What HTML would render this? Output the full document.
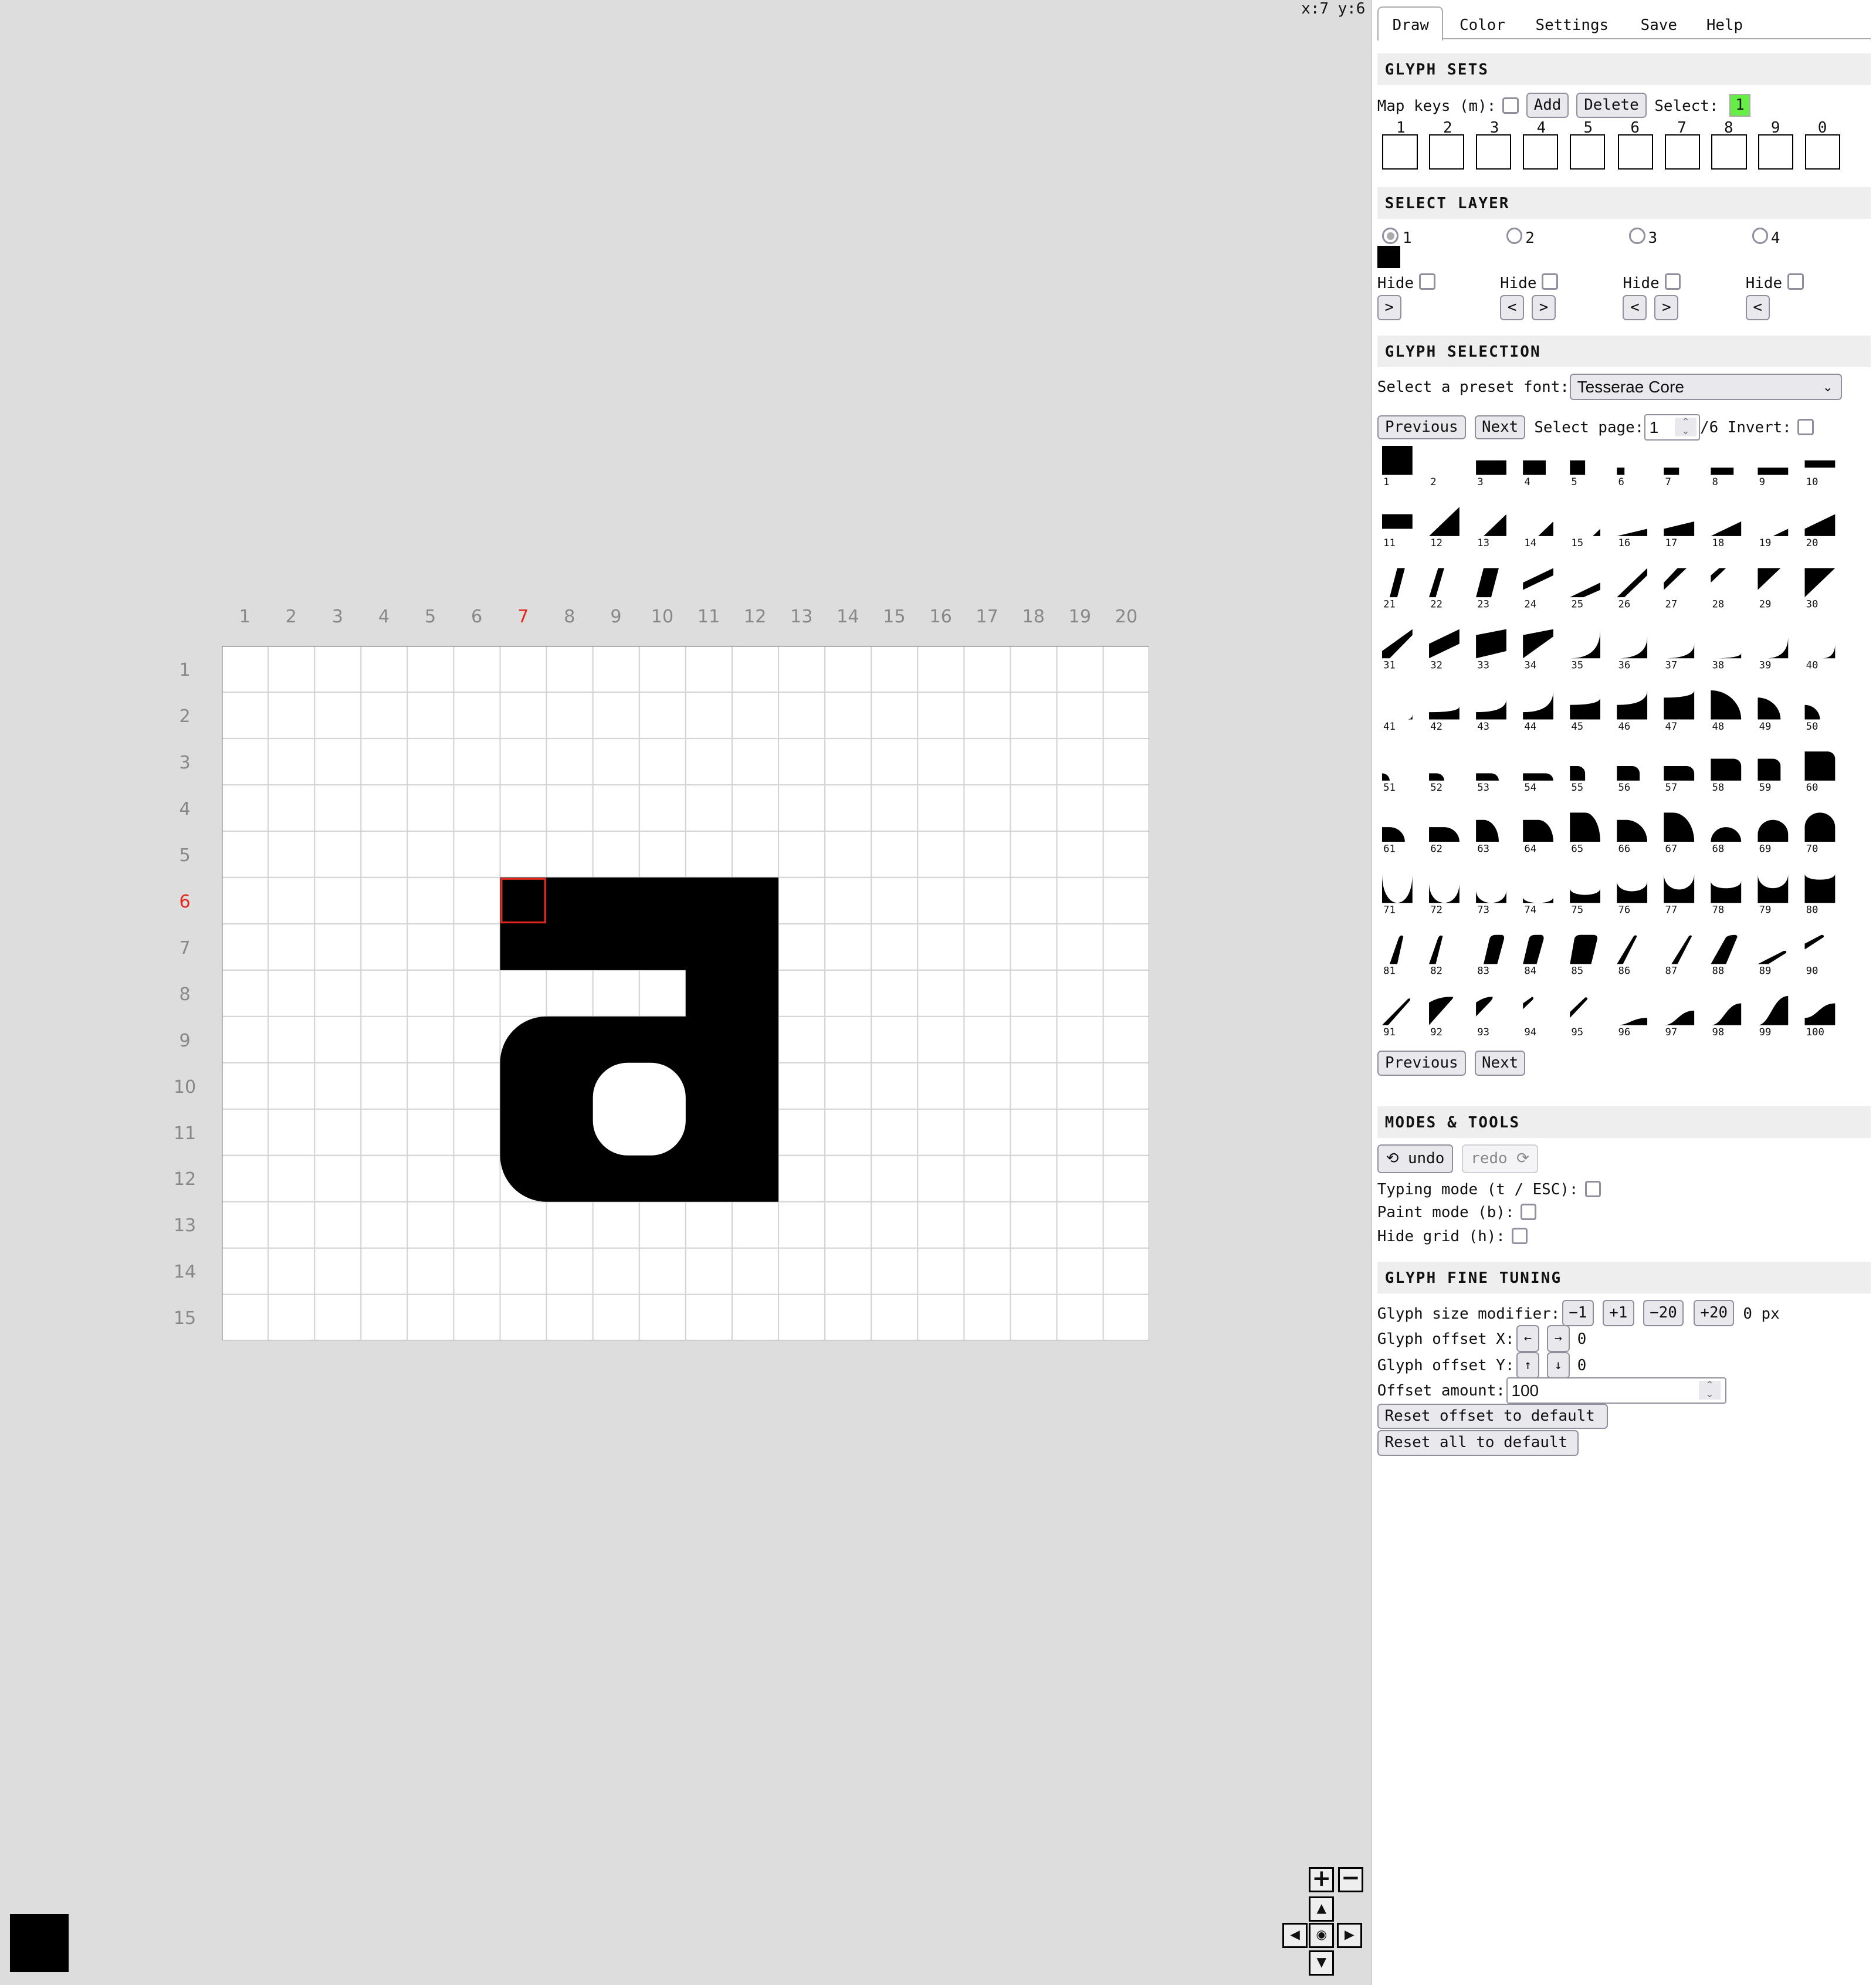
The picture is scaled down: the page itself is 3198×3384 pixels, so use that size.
<!DOCTYPE html>
<html><head><meta charset="utf-8">
<style>
html,body{margin:0;padding:0;width:3198px;height:3384px;overflow:hidden;background:#dddddd;}
#w{zoom:2.15789;width:1482px;height:1568px;position:relative;font-family:"DejaVu Sans Mono","Liberation Mono",monospace;font-size:12px;color:#111;}
.a{position:absolute;white-space:nowrap;}
.t{position:absolute;white-space:nowrap;line-height:14px;transform:translateY(-6px);}
#panel{position:absolute;left:1083px;top:0;width:399px;height:1568px;background:#fff;border-left:1px solid #cfcfcf;}
.hd{position:absolute;left:1088px;width:390px;height:25px;background:#eeeeee;}
.hd span{position:absolute;left:6px;top:6px;font-weight:bold;letter-spacing:1px;font-size:12px;}
.cb{position:absolute;width:10px;height:10px;border:1.5px solid #8f8f9d;border-radius:2px;background:#fff;}
.btn{position:absolute;box-sizing:border-box;background:#e9e9ed;border:1px solid #8f8f9d;border-radius:3px;text-align:center;font-size:12px;}
.gb{position:absolute;width:26px;height:26px;border:1px solid #000;top:106px;background:#fff;}
.rd{position:absolute;width:10px;height:10px;border:1.5px solid #8f8f9d;border-radius:50%;top:180px;}
.nv{position:absolute;box-sizing:border-box;width:20px;height:20px;border:1.5px solid #000;background:#eee;text-align:center;font-family:"DejaVu Sans",sans-serif;font-size:10px;line-height:17px;}
</style></head><body><div id="w">
<div class="a" style="left:1028px;top:0px;font-size:12px;">x:7 y:6</div>

<div style="position:absolute;left:175px;top:479px;width:733px;height:20px;font-family:'DejaVu Sans',sans-serif;font-size:14px;color:#888;display:flex;">
<span style="flex:1;text-align:center">1</span><span style="flex:1;text-align:center">2</span><span style="flex:1;text-align:center">3</span><span style="flex:1;text-align:center">4</span><span style="flex:1;text-align:center">5</span><span style="flex:1;text-align:center">6</span><span style="flex:1;text-align:center;color:#e0281e">7</span><span style="flex:1;text-align:center">8</span><span style="flex:1;text-align:center">9</span><span style="flex:1;text-align:center">10</span><span style="flex:1;text-align:center">11</span><span style="flex:1;text-align:center">12</span><span style="flex:1;text-align:center">13</span><span style="flex:1;text-align:center">14</span><span style="flex:1;text-align:center">15</span><span style="flex:1;text-align:center">16</span><span style="flex:1;text-align:center">17</span><span style="flex:1;text-align:center">18</span><span style="flex:1;text-align:center">19</span><span style="flex:1;text-align:center">20</span>
</div>
<div style="position:absolute;left:126px;top:511px;width:40px;height:549px;font-family:'DejaVu Sans',sans-serif;font-size:14px;color:#888;display:flex;flex-direction:column;">
<span style="flex:1;display:flex;align-items:center;justify-content:center">1</span><span style="flex:1;display:flex;align-items:center;justify-content:center">2</span><span style="flex:1;display:flex;align-items:center;justify-content:center">3</span><span style="flex:1;display:flex;align-items:center;justify-content:center">4</span><span style="flex:1;display:flex;align-items:center;justify-content:center">5</span><span style="flex:1;display:flex;align-items:center;justify-content:center;color:#e0281e">6</span><span style="flex:1;display:flex;align-items:center;justify-content:center">7</span><span style="flex:1;display:flex;align-items:center;justify-content:center">8</span><span style="flex:1;display:flex;align-items:center;justify-content:center">9</span><span style="flex:1;display:flex;align-items:center;justify-content:center">10</span><span style="flex:1;display:flex;align-items:center;justify-content:center">11</span><span style="flex:1;display:flex;align-items:center;justify-content:center">12</span><span style="flex:1;display:flex;align-items:center;justify-content:center">13</span><span style="flex:1;display:flex;align-items:center;justify-content:center">14</span><span style="flex:1;display:flex;align-items:center;justify-content:center">15</span>
</div>

<svg style="position:absolute;left:175px;top:510px" width="733" height="549" viewBox="0 0 20 15" preserveAspectRatio="none">
<rect x="0" y="0" width="20" height="15" fill="#fff"/>
<path stroke="#d4d4d4" stroke-width="1" vector-effect="non-scaling-stroke" d="M1 0V15M2 0V15M3 0V15M4 0V15M5 0V15M6 0V15M7 0V15M8 0V15M9 0V15M10 0V15M11 0V15M12 0V15M13 0V15M14 0V15M15 0V15M16 0V15M17 0V15M18 0V15M19 0V15M0 1H20M0 2H20M0 3H20M0 4H20M0 5H20M0 6H20M0 7H20M0 8H20M0 9H20M0 10H20M0 11H20M0 12H20M0 13H20M0 14H20"/>
<path d="M6 5H12V12H7A1 1 0 0 1 6 11V9A1 1 0 0 1 7 8H10V7H6Z" fill="#000"/>
<rect x="8" y="9" width="2" height="2" rx="0.75" ry="0.75" fill="#fff"/>
<rect x="6.03" y="5.03" width="0.94" height="0.94" fill="none" stroke="#e0281e" stroke-width="1.5" vector-effect="non-scaling-stroke"/>
<rect x="0" y="0" width="20" height="15" fill="none" stroke="#999" stroke-width="1.5" vector-effect="non-scaling-stroke"/>
</svg>

<div class="a" style="left:8px;top:1512px;width:46px;height:46px;background:#000"></div>

<div class="nv" style="left:1034px;top:1475px;font-size:18px;line-height:16px;font-weight:bold">+</div>
<div class="nv" style="left:1057px;top:1475px;font-size:18px;line-height:15px;font-weight:bold">−</div>
<div class="nv" style="left:1034px;top:1498px">▲</div>
<div class="nv" style="left:1013px;top:1519px">◀</div>
<div class="nv" style="left:1034px;top:1519px">◉</div>
<div class="nv" style="left:1056px;top:1519px">▶</div>
<div class="nv" style="left:1034px;top:1541px">▼</div>

<div id="panel"></div>

<div class="a" style="left:1088px;top:30px;width:390px;height:1px;background:#aaa"></div>
<div class="a" style="left:1088px;top:5px;width:52px;border:1px solid #aaa;border-bottom:none;border-radius:4px 4px 0 0;background:#fff;box-sizing:border-box;height:27px"></div>
<div class="t" style="left:1100px;top:19px">Draw</div>
<div class="t" style="left:1153px;top:19px">Color</div>
<div class="t" style="left:1213px;top:19px">Settings</div>
<div class="t" style="left:1296px;top:19px">Save</div>
<div class="t" style="left:1348px;top:19px">Help</div>

<div class="hd" style="top:42px"><span>GLYPH SETS</span></div>
<div class="t" style="left:1088px;top:83px">Map keys (m):</div>
<div class="cb" style="left:1187px;top:77px"></div>
<div class="btn" style="left:1206px;top:73px;width:33px;height:20px;line-height:18px">Add</div>
<div class="btn" style="left:1245px;top:73px;width:56px;height:20px;line-height:18px">Delete</div>
<div class="t" style="left:1307px;top:83px">Select:</div>
<div class="a" style="left:1366px;top:74px;width:17px;height:18px;background:#66ee44;border:1px solid #aaa;box-sizing:border-box;text-align:center;line-height:16px">1</div>
<div class="t" style="left:1103px;top:100px">1</div><div class="t" style="left:1140px;top:100px">2</div><div class="t" style="left:1177px;top:100px">3</div><div class="t" style="left:1214px;top:100px">4</div><div class="t" style="left:1251px;top:100px">5</div><div class="t" style="left:1288px;top:100px">6</div><div class="t" style="left:1325px;top:100px">7</div><div class="t" style="left:1362px;top:100px">8</div><div class="t" style="left:1399px;top:100px">9</div><div class="t" style="left:1436px;top:100px">0</div>
<div class="gb" style="left:1092px"></div><div class="gb" style="left:1129px"></div><div class="gb" style="left:1166px"></div><div class="gb" style="left:1203px"></div><div class="gb" style="left:1240px"></div><div class="gb" style="left:1278px"></div><div class="gb" style="left:1315px"></div><div class="gb" style="left:1352px"></div><div class="gb" style="left:1389px"></div><div class="gb" style="left:1426px"></div>

<div class="hd" style="top:148px"><span>SELECT LAYER</span></div>
<div class="rd" style="left:1092px;"><div style="position:absolute;left:2px;top:2px;width:6px;height:6px;border-radius:50%;background:#aaa"></div></div>
<div class="t" style="left:1108px;top:187px">1</div>
<div class="rd" style="left:1190px"></div><div class="t" style="left:1205px;top:187px">2</div>
<div class="rd" style="left:1287px"></div><div class="t" style="left:1302px;top:187px">3</div>
<div class="rd" style="left:1384px"></div><div class="t" style="left:1399px;top:187px">4</div>
<div class="a" style="left:1088px;top:194px;width:18px;height:18px;background:#000"></div>
<div class="t" style="left:1088px;top:223px">Hide</div><div class="cb" style="left:1121px;top:216px"></div>
<div class="t" style="left:1185px;top:223px">Hide</div><div class="cb" style="left:1218px;top:216px"></div>
<div class="t" style="left:1282px;top:223px">Hide</div><div class="cb" style="left:1315px;top:216px"></div>
<div class="t" style="left:1379px;top:223px">Hide</div><div class="cb" style="left:1412px;top:216px"></div>
<div class="btn" style="left:1088px;top:233px;width:19px;height:20px;line-height:18px">&gt;</div>
<div class="btn" style="left:1185px;top:233px;width:19px;height:20px;line-height:18px">&lt;</div>
<div class="btn" style="left:1210px;top:233px;width:19px;height:20px;line-height:18px">&gt;</div>
<div class="btn" style="left:1282px;top:233px;width:19px;height:20px;line-height:18px">&lt;</div>
<div class="btn" style="left:1307px;top:233px;width:19px;height:20px;line-height:18px">&gt;</div>
<div class="btn" style="left:1379px;top:233px;width:19px;height:20px;line-height:18px">&lt;</div>

<div class="hd" style="top:265px"><span>GLYPH SELECTION</span></div>
<div class="t" style="left:1088px;top:305px">Select a preset font:</div>
<div class="a" style="left:1240px;top:295px;width:215px;height:21px;box-sizing:border-box;background:#e9e9ed;border:1px solid #8f8f9d;border-radius:3px;font-family:'Liberation Sans',sans-serif;font-size:13px;line-height:19px;padding-left:5px">Tesserae Core<span style="position:absolute;right:6px;top:0;font-size:10px">&#8964;</span></div>

<div class="btn" style="left:1088px;top:328px;width:70px;height:19px;line-height:17px">Previous</div>
<div class="btn" style="left:1165px;top:328px;width:40px;height:19px;line-height:17px">Next</div>
<div class="t" style="left:1212px;top:337px">Select page:</div>
<div class="a" style="left:1299px;top:327px;width:44px;height:21px;box-sizing:border-box;border:1px solid #8f8f9d;border-radius:2px;background:#fff;font-family:'Liberation Sans',sans-serif;font-size:13px;line-height:19px;padding-left:3px">1<span style="position:absolute;right:2px;top:2px;width:17px;height:15px;background:#e9e9ed;font-size:8px;line-height:7px;text-align:center;color:#777">⌃<br>⌄</span></div>
<div class="t" style="left:1343px;top:337px">/6 Invert:</div>
<div class="cb" style="left:1420px;top:331px"></div>

<svg class="a" style="left:1092px;top:352px" width="380" height="470" font-family="DejaVu Sans Mono, monospace" font-size="8">
<g fill="#000">
<g transform="translate(0,0) scale(.24 .23)"><path d="M0 0H100V100H0Z"/></g>
<g transform="translate(74.2,0) scale(.24 .23)"><path d="M0 50H100V100H0Z"/></g>
<g transform="translate(111.3,0) scale(.24 .23)"><path d="M0 50H75V100H0Z"/></g>
<g transform="translate(148.4,0) scale(.24 .23)"><path d="M0 50H50V100H0Z"/></g>
<g transform="translate(185.5,0) scale(.24 .23)"><path d="M0 75H25V100H0Z"/></g>
<g transform="translate(222.6,0) scale(.24 .23)"><path d="M0 75H50V100H0Z"/></g>
<g transform="translate(259.7,0) scale(.24 .23)"><path d="M0 75H75V100H0Z"/></g>
<g transform="translate(296.8,0) scale(.24 .23)"><path d="M0 75H100V100H0Z"/></g>
<g transform="translate(333.9,0) scale(.24 .23)"><path d="M0 50H100V75H0Z"/></g>
<g transform="translate(0,48.3) scale(.24 .23)"><path d="M0 25H100V75H0Z"/></g>
<g transform="translate(37.1,48.3) scale(.24 .23)"><path d="M0 100H100V0Z"/></g>
<g transform="translate(74.2,48.3) scale(.24 .23)"><path d="M25 100H100V25Z"/></g>
<g transform="translate(111.3,48.3) scale(.24 .23)"><path d="M50 100H100V50Z"/></g>
<g transform="translate(148.4,48.3) scale(.24 .23)"><path d="M75 100H100V75Z"/></g>
<g transform="translate(185.5,48.3) scale(.24 .23)"><path d="M0 100H100V75Z"/></g>
<g transform="translate(222.6,48.3) scale(.24 .23)"><path d="M0 75L100 50V100H0Z"/></g>
<g transform="translate(259.7,48.3) scale(.24 .23)"><path d="M0 100L100 50V100Z"/></g>
<g transform="translate(296.8,48.3) scale(.24 .23)"><path d="M50 100L100 75V100Z"/></g>
<g transform="translate(333.9,48.3) scale(.24 .23)"><path d="M0 75L100 25V100H0Z"/></g>
<g transform="translate(0,96.6) scale(.24 .23)"><path d="M50 0H75L50 100H25Z"/></g>
<g transform="translate(37.1,96.6) scale(.24 .23)"><path d="M30 0H50L22 100H0Z"/></g>
<g transform="translate(74.2,96.6) scale(.24 .23)"><path d="M25 0H75L50 100H0Z"/></g>
<g transform="translate(111.3,96.6) scale(.24 .23)"><path d="M0 50L100 0V25L0 75Z"/></g>
<g transform="translate(148.4,96.6) scale(.24 .23)"><path d="M0 100L100 50V75L45 100Z"/></g>
<g transform="translate(185.5,96.6) scale(.24 .23)"><path d="M0 100L100 0V25L25 100Z"/></g>
<g transform="translate(222.6,96.6) scale(.24 .23)"><path d="M0 50L45 0H75L0 75Z"/></g>
<g transform="translate(259.7,96.6) scale(.24 .23)"><path d="M0 25L28 0H50L0 50Z"/></g>
<g transform="translate(296.8,96.6) scale(.24 .23)"><path d="M0 0H75L0 75Z"/></g>
<g transform="translate(333.9,96.6) scale(.24 .23)"><path d="M0 0H100L0 100Z"/></g>
<g transform="translate(0,144.9) scale(.24 .23)"><path d="M0 75L100 0V20L25 100H0Z"/></g>
<g transform="translate(37.1,144.9) scale(.24 .23)"><path d="M0 50L100 0V50L0 100Z"/></g>
<g transform="translate(74.2,144.9) scale(.24 .23)"><path d="M0 20L100 0V75L0 100Z"/></g>
<g transform="translate(111.3,144.9) scale(.24 .23)"><path d="M0 20L100 0V25L0 100Z"/></g>
<g transform="translate(148.4,144.9) scale(.24 .23)"><path d="M0 100Q100 100 100 0V100Z"/></g>
<g transform="translate(185.5,144.9) scale(.24 .23)"><path d="M0 100Q100 100 100 25V100Z"/></g>
<g transform="translate(222.6,144.9) scale(.24 .23)"><path d="M0 100Q100 100 100 50V100Z"/></g>
<g transform="translate(259.7,144.9) scale(.24 .23)"><path d="M0 100Q100 100 100 82V100Z"/></g>
<g transform="translate(296.8,144.9) scale(.24 .23)"><path d="M25 100Q100 100 100 25V100Z"/></g>
<g transform="translate(333.9,144.9) scale(.24 .23)"><path d="M55 100Q100 100 100 50V100Z"/></g>
<g transform="translate(0,193.2) scale(.24 .23)"><path d="M82 100Q100 100 100 80V100Z"/></g>
<g transform="translate(37.1,193.2) scale(.24 .23)"><path d="M0 75Q100 75 100 55V100H0Z"/></g>
<g transform="translate(74.2,193.2) scale(.24 .23)"><path d="M0 75Q100 75 100 30V100H0Z"/></g>
<g transform="translate(111.3,193.2) scale(.24 .23)"><path d="M0 75Q100 75 100 0V100H0Z"/></g>
<g transform="translate(148.4,193.2) scale(.24 .23)"><path d="M0 50Q100 50 100 25V100H0Z"/></g>
<g transform="translate(185.5,193.2) scale(.24 .23)"><path d="M0 50Q100 50 100 0V100H0Z"/></g>
<g transform="translate(222.6,193.2) scale(.24 .23)"><path d="M0 25Q100 25 100 0V100H0Z"/></g>
<g transform="translate(259.7,193.2) scale(.24 .23)"><path d="M0 100V0A100 100 0 0 1 100 100Z"/></g>
<g transform="translate(296.8,193.2) scale(.24 .23)"><path d="M0 100V25A75 75 0 0 1 75 100Z"/></g>
<g transform="translate(333.9,193.2) scale(.24 .23)"><path d="M0 100V50A50 50 0 0 1 50 100Z"/></g>
<g transform="translate(0,241.5) scale(.24 .23)"><path d="M0 100V75A25 25 0 0 1 25 100Z"/></g>
<g transform="translate(37.1,241.5) scale(.24 .23)"><path d="M0 100V75H25A25 25 0 0 1 50 100Z"/></g>
<g transform="translate(74.2,241.5) scale(.24 .23)"><path d="M0 100V75H50A25 25 0 0 1 75 100Z"/></g>
<g transform="translate(111.3,241.5) scale(.24 .23)"><path d="M0 100V75H75A25 25 0 0 1 100 100Z"/></g>
<g transform="translate(148.4,241.5) scale(.24 .23)"><path d="M0 100V50H25A25 25 0 0 1 50 75V100Z"/></g>
<g transform="translate(185.5,241.5) scale(.24 .23)"><path d="M0 100V50H50A25 25 0 0 1 75 75V100Z"/></g>
<g transform="translate(222.6,241.5) scale(.24 .23)"><path d="M0 100V50H75A25 25 0 0 1 100 75V100Z"/></g>
<g transform="translate(259.7,241.5) scale(.24 .23)"><path d="M0 100V25H75A25 25 0 0 1 100 50V100Z"/></g>
<g transform="translate(296.8,241.5) scale(.24 .23)"><path d="M0 100V25H50A25 25 0 0 1 75 50V100Z"/></g>
<g transform="translate(333.9,241.5) scale(.24 .23)"><path d="M0 100V0H75A25 25 0 0 1 100 25V100Z"/></g>
<g transform="translate(0,289.8) scale(.24 .23)"><path d="M0 100V50H25A50 50 0 0 1 75 100Z"/></g>
<g transform="translate(37.1,289.8) scale(.24 .23)"><path d="M0 100V50H50A50 50 0 0 1 100 100Z"/></g>
<g transform="translate(74.2,289.8) scale(.24 .23)"><path d="M0 100V25H25A50 75 0 0 1 75 100Z"/></g>
<g transform="translate(111.3,289.8) scale(.24 .23)"><path d="M0 100V25H50A50 75 0 0 1 100 100Z"/></g>
<g transform="translate(148.4,289.8) scale(.24 .23)"><path d="M0 100V0H50A50 100 0 0 1 100 100Z"/></g>
<g transform="translate(185.5,289.8) scale(.24 .23)"><path d="M0 100V25H30A70 75 0 0 1 100 100Z"/></g>
<g transform="translate(222.6,289.8) scale(.24 .23)"><path d="M0 100V0H30A70 100 0 0 1 100 100Z"/></g>
<g transform="translate(259.7,289.8) scale(.24 .23)"><path d="M0 100A50 50 0 0 1 100 100Z"/></g>
<g transform="translate(296.8,289.8) scale(.24 .23)"><path d="M0 100V75A50 50 0 0 1 100 75V100Z"/></g>
<g transform="translate(333.9,289.8) scale(.24 .23)"><path d="M0 100V50A50 50 0 0 1 100 50V100Z"/></g>
<g transform="translate(0,338.1) scale(.24 .23)"><path d="M0 0C0 133 100 133 100 0V100H0Z"/></g>
<g transform="translate(37.1,338.1) scale(.24 .23)"><path d="M0 30C0 123 100 123 100 30V100H0Z"/></g>
<g transform="translate(74.2,338.1) scale(.24 .23)"><path d="M0 55C0 115 100 115 100 55V100H0Z"/></g>
<g transform="translate(111.3,338.1) scale(.24 .23)"><path d="M0 80C0 107 100 107 100 80V100H0Z"/></g>
<g transform="translate(148.4,338.1) scale(.24 .23)"><path d="M0 50C0 80 100 80 100 50V100H0Z"/></g>
<g transform="translate(185.5,338.1) scale(.24 .23)"><path d="M0 25C0 72 100 72 100 25V100H0Z"/></g>
<g transform="translate(222.6,338.1) scale(.24 .23)"><path d="M0 0C0 72 100 72 100 0V100H0Z"/></g>
<g transform="translate(259.7,338.1) scale(.24 .23)"><path d="M0 25C0 58 100 58 100 25V100H0Z"/></g>
<g transform="translate(296.8,338.1) scale(.24 .23)"><path d="M0 0C0 66 100 66 100 0V100H0Z"/></g>
<g transform="translate(333.9,338.1) scale(.24 .23)"><path d="M0 0C0 27 100 27 100 0V100H0Z"/></g>
<g transform="translate(0,386.4) scale(.24 .23)"><path d="M25 100L55 10Q62 -3 70 5L50 100Z"/></g>
<g transform="translate(37.1,386.4) scale(.24 .23)"><path d="M0 100L30 10Q38 -3 45 5L22 100Z"/></g>
<g transform="translate(74.2,386.4) scale(.24 .23)"><path d="M25 100L45 12Q50 0 65 0H85Q95 2 92 15L70 100Z"/></g>
<g transform="translate(111.3,386.4) scale(.24 .23)"><path d="M0 100L20 12Q25 0 40 0H60Q70 2 68 15L45 100Z"/></g>
<g transform="translate(148.4,386.4) scale(.24 .23)"><path d="M0 100L15 12Q20 0 35 0H80Q92 2 90 15L70 100Z"/></g>
<g transform="translate(185.5,386.4) scale(.24 .23)"><path d="M0 100L55 5Q62 -2 66 5L20 100Z"/></g>
<g transform="translate(222.6,386.4) scale(.24 .23)"><path d="M25 100L82 5Q90 -2 92 5L45 100Z"/></g>
<g transform="translate(259.7,386.4) scale(.24 .23)"><path d="M0 100L50 8Q60 0 80 0Q90 2 86 10L50 100Z"/></g>
<g transform="translate(296.8,386.4) scale(.24 .23)"><path d="M0 100L85 55Q97 53 93 62L35 100Z"/></g>
<g transform="translate(333.9,386.4) scale(.24 .23)"><path d="M0 30L55 0Q65 0 62 8L0 50Z"/></g>
<g transform="translate(0,434.7) scale(.24 .23)"><path d="M0 100L85 10Q95 5 92 15L20 100Z"/></g>
<g transform="translate(37.1,434.7) scale(.24 .23)"><path d="M0 22Q30 5 60 3H80Q78 10 70 18L0 100Z"/></g>
<g transform="translate(74.2,434.7) scale(.24 .23)"><path d="M0 22Q25 5 45 3H55Q55 10 48 18L0 70Z"/></g>
<g transform="translate(111.3,434.7) scale(.24 .23)"><path d="M0 25L30 3Q36 3 33 12L0 45Z"/></g>
<g transform="translate(148.4,434.7) scale(.24 .23)"><path d="M0 55L50 5Q60 3 57 12L0 75Z"/></g>
<g transform="translate(185.5,434.7) scale(.24 .23)"><path d="M0 100C40 100 50 75 100 75V100Z"/></g>
<g transform="translate(222.6,434.7) scale(.24 .23)"><path d="M0 100C40 100 50 50 100 50V100Z"/></g>
<g transform="translate(259.7,434.7) scale(.24 .23)"><path d="M0 100C40 100 50 25 100 25V100Z"/></g>
<g transform="translate(296.8,434.7) scale(.24 .23)"><path d="M0 100C40 100 50 0 100 0V100Z"/></g>
<g transform="translate(333.9,434.7) scale(.24 .23)"><path d="M0 75C40 75 50 25 100 25V100H0Z"/></g>
</g>
<g fill="#111">
<text x="1" y="31">1</text><text x="38.1" y="31">2</text><text x="75.2" y="31">3</text><text x="112.3" y="31">4</text><text x="149.4" y="31">5</text><text x="186.5" y="31">6</text><text x="223.6" y="31">7</text><text x="260.7" y="31">8</text><text x="297.8" y="31">9</text><text x="334.9" y="31">10</text>
<text x="1" y="79.3">11</text><text x="38.1" y="79.3">12</text><text x="75.2" y="79.3">13</text><text x="112.3" y="79.3">14</text><text x="149.4" y="79.3">15</text><text x="186.5" y="79.3">16</text><text x="223.6" y="79.3">17</text><text x="260.7" y="79.3">18</text><text x="297.8" y="79.3">19</text><text x="334.9" y="79.3">20</text>
<text x="1" y="127.6">21</text><text x="38.1" y="127.6">22</text><text x="75.2" y="127.6">23</text><text x="112.3" y="127.6">24</text><text x="149.4" y="127.6">25</text><text x="186.5" y="127.6">26</text><text x="223.6" y="127.6">27</text><text x="260.7" y="127.6">28</text><text x="297.8" y="127.6">29</text><text x="334.9" y="127.6">30</text>
<text x="1" y="175.9">31</text><text x="38.1" y="175.9">32</text><text x="75.2" y="175.9">33</text><text x="112.3" y="175.9">34</text><text x="149.4" y="175.9">35</text><text x="186.5" y="175.9">36</text><text x="223.6" y="175.9">37</text><text x="260.7" y="175.9">38</text><text x="297.8" y="175.9">39</text><text x="334.9" y="175.9">40</text>
<text x="1" y="224.2">41</text><text x="38.1" y="224.2">42</text><text x="75.2" y="224.2">43</text><text x="112.3" y="224.2">44</text><text x="149.4" y="224.2">45</text><text x="186.5" y="224.2">46</text><text x="223.6" y="224.2">47</text><text x="260.7" y="224.2">48</text><text x="297.8" y="224.2">49</text><text x="334.9" y="224.2">50</text>
<text x="1" y="272.5">51</text><text x="38.1" y="272.5">52</text><text x="75.2" y="272.5">53</text><text x="112.3" y="272.5">54</text><text x="149.4" y="272.5">55</text><text x="186.5" y="272.5">56</text><text x="223.6" y="272.5">57</text><text x="260.7" y="272.5">58</text><text x="297.8" y="272.5">59</text><text x="334.9" y="272.5">60</text>
<text x="1" y="320.8">61</text><text x="38.1" y="320.8">62</text><text x="75.2" y="320.8">63</text><text x="112.3" y="320.8">64</text><text x="149.4" y="320.8">65</text><text x="186.5" y="320.8">66</text><text x="223.6" y="320.8">67</text><text x="260.7" y="320.8">68</text><text x="297.8" y="320.8">69</text><text x="334.9" y="320.8">70</text>
<text x="1" y="369.1">71</text><text x="38.1" y="369.1">72</text><text x="75.2" y="369.1">73</text><text x="112.3" y="369.1">74</text><text x="149.4" y="369.1">75</text><text x="186.5" y="369.1">76</text><text x="223.6" y="369.1">77</text><text x="260.7" y="369.1">78</text><text x="297.8" y="369.1">79</text><text x="334.9" y="369.1">80</text>
<text x="1" y="417.4">81</text><text x="38.1" y="417.4">82</text><text x="75.2" y="417.4">83</text><text x="112.3" y="417.4">84</text><text x="149.4" y="417.4">85</text><text x="186.5" y="417.4">86</text><text x="223.6" y="417.4">87</text><text x="260.7" y="417.4">88</text><text x="297.8" y="417.4">89</text><text x="334.9" y="417.4">90</text>
<text x="1" y="465.7">91</text><text x="38.1" y="465.7">92</text><text x="75.2" y="465.7">93</text><text x="112.3" y="465.7">94</text><text x="149.4" y="465.7">95</text><text x="186.5" y="465.7">96</text><text x="223.6" y="465.7">97</text><text x="260.7" y="465.7">98</text><text x="297.8" y="465.7">99</text><text x="334.9" y="465.7">100</text>
</g>
</svg>

<div class="btn" style="left:1088px;top:830px;width:70px;height:20px;line-height:18px">Previous</div>
<div class="btn" style="left:1165px;top:830px;width:40px;height:20px;line-height:18px">Next</div>

<div class="hd" style="top:874px"><span>MODES &amp; TOOLS</span></div>
<div class="btn" style="left:1088px;top:904px;width:60px;height:23px;line-height:21px">⟲ undo</div>
<div class="btn" style="left:1155px;top:904px;width:60px;height:23px;line-height:21px;background:#f4f4f6;border-color:#cfcfd6;color:#888">redo ⟳</div>
<div class="t" style="left:1088px;top:939px">Typing mode (t / ESC):</div><div class="cb" style="left:1252px;top:933px"></div>
<div class="t" style="left:1088px;top:957px">Paint mode (b):</div><div class="cb" style="left:1201px;top:951px"></div>
<div class="t" style="left:1088px;top:976px">Hide grid (h):</div><div class="cb" style="left:1194px;top:970px"></div>

<div class="hd" style="top:997px"><span>GLYPH FINE TUNING</span></div>
<div class="t" style="left:1088px;top:1037px">Glyph size modifier:</div>
<div class="btn" style="left:1234px;top:1027px;width:25px;height:21px;line-height:19px">−1</div>
<div class="btn" style="left:1266px;top:1027px;width:25px;height:21px;line-height:19px">+1</div>
<div class="btn" style="left:1298px;top:1027px;width:32px;height:21px;line-height:19px">−20</div>
<div class="btn" style="left:1338px;top:1027px;width:32px;height:21px;line-height:19px">+20</div>
<div class="t" style="left:1377px;top:1037px">0 px</div>
<div class="t" style="left:1088px;top:1057px">Glyph offset X:</div>
<div class="btn" style="left:1198px;top:1047px;width:18px;height:21px;line-height:19px;font-size:10px">←</div>
<div class="btn" style="left:1222px;top:1047px;width:18px;height:21px;line-height:19px;font-size:10px">→</div>
<div class="t" style="left:1246px;top:1057px">0</div>
<div class="t" style="left:1088px;top:1078px">Glyph offset Y:</div>
<div class="btn" style="left:1198px;top:1068px;width:18px;height:21px;line-height:19px;font-size:10px">↑</div>
<div class="btn" style="left:1222px;top:1068px;width:18px;height:21px;line-height:19px;font-size:10px">↓</div>
<div class="t" style="left:1246px;top:1078px">0</div>
<div class="t" style="left:1088px;top:1098px">Offset amount:</div>
<div class="a" style="left:1190px;top:1088px;width:174px;height:21px;box-sizing:border-box;border:1px solid #8f8f9d;border-radius:2px;background:#fff;font-family:'Liberation Sans',sans-serif;font-size:13px;line-height:19px;padding-left:3px">100<span style="position:absolute;right:4px;top:2px;width:17px;height:15px;background:#e9e9ed;font-size:8px;line-height:7px;text-align:center;color:#777">⌃<br>⌄</span></div>
<div class="btn" style="left:1088px;top:1109px;width:182px;height:20px;line-height:18px;text-align:left;padding-left:5px">Reset offset to default</div>
<div class="btn" style="left:1088px;top:1130px;width:159px;height:20px;line-height:18px;text-align:left;padding-left:5px">Reset all to default</div>
</div></body></html>
